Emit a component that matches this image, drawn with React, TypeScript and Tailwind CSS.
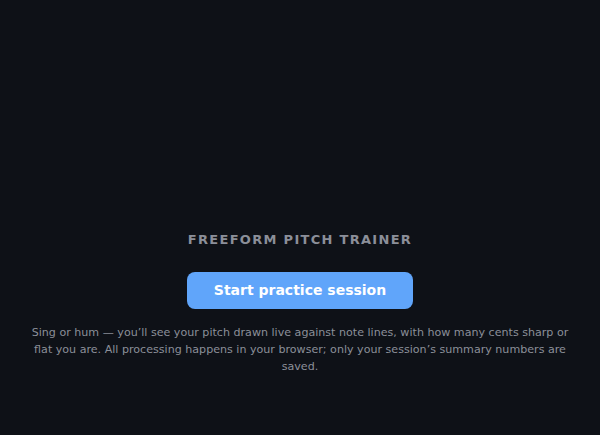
export default function App() {
  return (
    <div
      className="w-full h-[435px] bg-[#0e1117] flex flex-col items-center pt-[230px] px-6"
      style={{ fontFamily: '"DejaVu Sans", sans-serif' }}
    >
      <h1 className="text-[13px] font-bold tracking-[0.1em] text-[#8b8f99] leading-[20px]">
        FREEFORM PITCH TRAINER
      </h1>
      <button className="mt-[22px] w-[226px] h-[37px] rounded-lg bg-[#60a5fa] text-white font-bold text-[14px]">
        Start practice session
      </button>
      <p className="mt-[15px] text-[11.1px] leading-[17px] text-[#8b8f99] text-center">
        Sing or hum — you’ll see your pitch drawn live against note lines, with how many cents sharp or flat you are. All processing happens in your browser; only your session’s summary numbers are saved.
      </p>
    </div>
  );
}
